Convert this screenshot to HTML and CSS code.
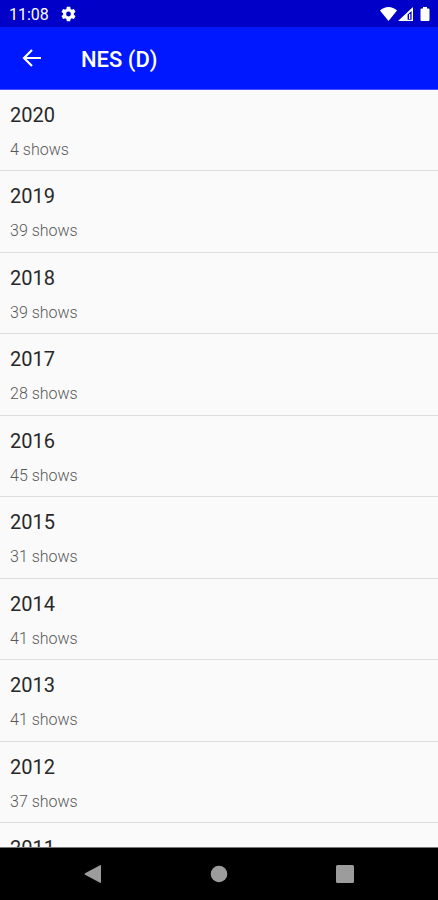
FILE: index.html
```html
<!DOCTYPE html>
<html lang="en">
<head>
<meta charset="utf-8">
<meta name="viewport" content="width=device-width, initial-scale=1">
<title>NES (D)</title>
<link rel="stylesheet" href="styles.css">
</head>
<body>
<div class="status">
  <span class="time">11:08</span>
  <svg class="gear" width="15" height="16" viewBox="2 2 20 20" aria-hidden="true"><path fill="currentColor" d="M19.14 12.94c.04-.3.06-.61.06-.94s-.02-.64-.07-.94l2.03-1.58c.18-.14.23-.41.12-.61l-1.92-3.32c-.12-.22-.37-.29-.59-.22l-2.39.96c-.5-.38-1.03-.7-1.62-.94l-.36-2.54c-.04-.24-.24-.41-.48-.41h-3.84c-.24 0-.43.17-.47.41l-.36 2.54c-.59.24-1.13.57-1.62.94l-2.39-.96c-.22-.08-.47 0-.59.22L2.740 8.870c-.12.21-.08.47.12.61l2.030 1.580c-.05.3-.09.63-.09.94s.02.64.07.94l-2.030 1.580c-.18.14-.23.41-.12.61l1.920 3.320c.12.22.37.29.59.22l2.390-.96c.5.38 1.030.7 1.620.94l.36 2.540c.05.24.24.41.48.41h3.840c.24 0 .44-.17.47-.41l.36-2.540c.59-.24 1.130-.56 1.620-.94l2.390.96c.22.08.47 0 .59-.22l1.920-3.320c.12-.22.07-.47-.12-.61l-2.010-1.580zM12 15.200a3.200 3.200 0 1 1 0-6.400 3.200 3.200 0 0 1 0 6.400z"/></svg>
  <svg class="signals" width="52" height="16" viewBox="0 0 52 16" aria-hidden="true">
    <path fill="currentColor" d="M0 4.500C2.400 2.300 5.400 1 8.500 1s6.100 1.300 8.500 3.500L8.500 15z"/>
    <path fill="currentColor" fill-rule="evenodd" d="M33 1v14H18zM31.600 5v8.800h-4V8.500z"/>
    <path fill="currentColor" d="M29 8h1.300v5H29z"/>
    <path fill="currentColor" d="M43 1h4v1.500h1.500q1 0 1 1V14q0 1-1 1h-7q-1 0-1-1V3.500q0-1 1-1H43z"/>
  </svg>
</div>
<header class="appbar">
  <button class="back" type="button" aria-label="Back"><svg width="20" height="20" viewBox="0 0 20 20"><path fill="none" stroke="currentColor" stroke-width="2.200" d="M19 10H2.500M10 2l-8 8 8 8"/></svg></button>
  <h1 class="title">NES (D)</h1>
</header>
<main class="content">
  <ul class="years">
    <li class="row"><span class="year">2020</span><span class="count">4 shows</span></li>
    <li class="row"><span class="year">2019</span><span class="count">39 shows</span></li>
    <li class="row"><span class="year">2018</span><span class="count">39 shows</span></li>
    <li class="row"><span class="year">2017</span><span class="count">28 shows</span></li>
    <li class="row"><span class="year">2016</span><span class="count">45 shows</span></li>
    <li class="row"><span class="year">2015</span><span class="count">31 shows</span></li>
    <li class="row"><span class="year">2014</span><span class="count">41 shows</span></li>
    <li class="row"><span class="year">2013</span><span class="count">41 shows</span></li>
    <li class="row"><span class="year">2012</span><span class="count">37 shows</span></li>
    <li class="row"><span class="year">2011</span></li>
  </ul>
</main>
<nav class="navbar" aria-label="System">
  <button class="key" type="button" aria-label="Back"><svg width="18" height="20" viewBox="0 0 18 20"><path fill="currentColor" d="M16 1.200q1-.5 1 .6v16.400q0 1.100-1 .6L1 10.700q-1-.7 0-1.400z"/></svg></button>
  <button class="key" type="button" aria-label="Home"><svg width="18" height="18" viewBox="0 0 18 18"><circle fill="currentColor" cx="9" cy="9" r="8.300"/></svg></button>
  <button class="key" type="button" aria-label="Recent apps"><svg width="18" height="18" viewBox="0 0 18 18"><rect fill="currentColor" width="18" height="18" rx="1.500"/></svg></button>
</nav>
</body>
</html>
```

FILE: styles.css
```css
* {
  box-sizing: border-box;
}

body {
  margin: 0;
  height: 100vh;
  display: flex;
  flex-direction: column;
  background: #fafafa;
  font-family: Roboto, sans-serif;
}

button {
  border: 0;
  padding: 0;
  background: none;
  color: inherit;
  display: flex;
  align-items: center;
  justify-content: center;
}

.status {
  flex: none;
  height: 27px;
  padding: 1px 6px 0 9px;
  display: flex;
  align-items: center;
  background: #0000c8;
  color: #fff;
}

.time {
  padding-top: 2px;
  font-size: 16px;
  line-height: 24px;
}

.gear {
  margin-left: 12px;
}

.signals {
  margin-left: auto;
}

.appbar {
  flex: none;
  height: 63px;
  padding: 0 20px;
  display: flex;
  align-items: center;
  gap: 37px;
  background: #0018ff;
  border-bottom: 1px solid #4a50ff;
  color: #fff;
}

.back {
  width: 24px;
  height: 40px;
}

.title {
  margin: 0;
  padding-top: 4px;
  font-size: 22px;
  line-height: 28px;
  font-weight: 500;
}

.content {
  flex: 1;
  min-height: 0;
  overflow: hidden;
}

.years {
  margin: 0;
  padding: 0;
  list-style: none;
}

.row {
  display: flex;
  flex-direction: column;
  gap: 13px;
  height: 81px;
  padding: 13px 10px 0;
  border-bottom: 1px solid #dedede;
}

.row:nth-child(even) {
  height: 82px;
}

.year {
  font-size: 20px;
  line-height: 24px;
  color: #282828;
}

.count {
  font-size: 16px;
  line-height: 20px;
  font-weight: 300;
  color: #585858;
}

.navbar {
  flex: none;
  height: 53px;
  display: flex;
  align-items: center;
  justify-content: center;
  gap: 86px;
  background: #000;
  border-top: 1px solid #777;
  color: #9c9c9c;
}

.key {
  width: 40px;
  height: 40px;
}
```
